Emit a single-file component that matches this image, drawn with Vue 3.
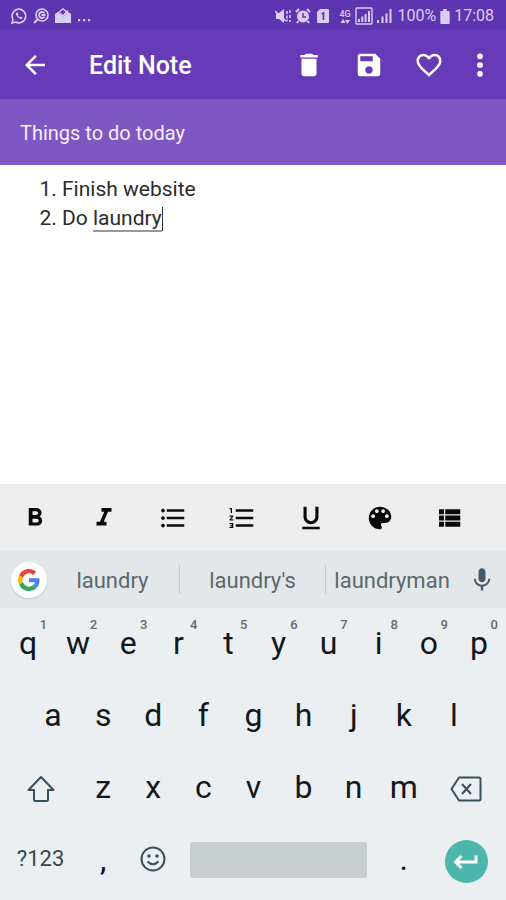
<script setup>
import { ref } from 'vue'

const title = ref('Things to do today')

const actions = [
  { label: 'Delete', d: 'M6 19c0 1.1.9 2 2 2h8c1.1 0 2-.9 2-2V7H6v12zM19 4h-3.500l-1-1h-5l-1 1H5v2h14V4z' },
  { label: 'Save', d: 'M17 3H5a2 2 0 0 0-2 2v14a2 2 0 0 0 2 2h14c1.100 0 2-.9 2-2V7l-4-4zm-5 16c-1.660 0-3-1.340-3-3s1.340-3 3-3 3 1.340 3 3-1.340 3-3 3zm3-10H5V5h10v4z' },
  { label: 'Favourite', d: 'M16.500 3c-1.740 0-3.410.81-4.500 2.090C10.910 3.810 9.240 3 7.500 3 4.420 3 2 5.420 2 8.500c0 3.780 3.400 6.860 8.550 11.540L12 21.350l1.450-1.320C18.600 15.360 22 12.280 22 8.500 22 5.420 19.580 3 16.500 3zm-4.400 15.550l-.1.1-.1-.1C7.140 14.240 4 11.390 4 8.500 4 6.500 5.500 5 7.500 5c1.540 0 3.040.99 3.570 2.360h1.870C13.460 5.990 14.960 5 16.500 5c2 0 3.500 1.500 3.500 3.500 0 2.890-3.140 5.740-7.900 10.050z' },
]

const tools = [
  { label: 'Bold', d: 'M15.600 10.790c.97-.67 1.650-1.770 1.650-2.790 0-2.260-1.750-4-4-4H7v14h7.040c2.090 0 3.710-1.700 3.710-3.790 0-1.520-.86-2.820-2.150-3.420zM10 6.500h3c.83 0 1.500.67 1.500 1.500s-.67 1.500-1.500 1.500h-3v-3zm3.500 9H10v-3h3.500c.83 0 1.500.67 1.500 1.500s-.67 1.500-1.500 1.500z' },
  { label: 'Italic', d: 'M10 4v3h2.210l-3.420 8H6v3h8v-3h-2.210l3.420-8H18V4z' },
  { label: 'Bulleted list', d: 'M4 10.500c-.83 0-1.500.67-1.500 1.500s.67 1.500 1.500 1.500 1.500-.67 1.500-1.500-.67-1.500-1.500-1.500zm0-6c-.83 0-1.500.67-1.500 1.500S3.170 7.500 4 7.500 5.500 6.830 5.500 6 4.830 4.500 4 4.500zm0 12c-.83 0-1.500.68-1.500 1.500s.68 1.500 1.500 1.500 1.500-.68 1.500-1.500-.67-1.500-1.500-1.500zM7 19h14v-2H7v2zm0-6h14v-2H7v2zm0-8v2h14V5H7z' },
  { label: 'Numbered list', d: 'M2 17h2v.5H3v1h1v.5H2v1h3v-4H2v1zm1-9h1V4H2v1h1v3zm-1 3h1.800L2 13.100v.9h3v-1H3.200L5 10.900V10H2v1zm5-6v2h14V5H7zm0 14h14v-2H7v2zm0-6h14v-2H7v2z' },
  { label: 'Underline', d: 'M12 17c3.310 0 6-2.690 6-6V3h-2.500v8c0 1.930-1.570 3.500-3.500 3.500S8.500 12.930 8.500 11V3H6v8c0 3.310 2.690 6 6 6zm-7 2v2h14v-2H5z' },
  { label: 'Colour', d: 'M12 3a9 9 0 0 0 0 18c.83 0 1.500-.67 1.500-1.500 0-.39-.15-.74-.39-1.010-.23-.26-.38-.61-.38-.99 0-.83.67-1.500 1.500-1.500H16c2.760 0 5-2.240 5-5 0-4.420-4.030-8-9-8zm-5.500 9c-.83 0-1.500-.67-1.500-1.500S5.670 9 6.500 9 8 9.670 8 10.500 7.330 12 6.500 12zm3-4C8.670 8 8 7.330 8 6.500S8.670 5 9.500 5s1.500.67 1.500 1.500S10.330 8 9.500 8zm5 0c-.83 0-1.500-.67-1.500-1.500S13.670 5 14.500 5s1.500.67 1.500 1.500S15.330 8 14.500 8zm3 4c-.83 0-1.500-.67-1.500-1.500S16.670 9 17.500 9s1.500.67 1.500 1.500-.67 1.500-1.500 1.500z' },
  { label: 'List view', d: 'M4 14h4v-4H4v4zm0 5h4v-4H4v4zM4 9h4V5H4v4zm5 5h12v-4H9v4zm0 5h12v-4H9v4zM9 5v4h12V5H9z' },
]

const suggestions = ['laundry', "laundry's", 'laundryman']
const topRow = [...'qwertyuiop'].map((letter, i) => ({ letter, digit: (i + 1) % 10 }))
const homeRow = [...'asdfghjkl']
const bottomRow = [...'zxcvbnm']
</script>

<template>
  <div class="screen">
    <div class="status">
      <div class="status-left">
        <svg class="s16" viewBox="0 0 16 16" fill="none" stroke="currentColor">
          <path d="M1 15l1-3.600A6.800 6.800 0 1 1 4.700 14z" stroke-width="1.600" />
          <path d="M5.600 4.500c-1 .8-.9 2.200.5 4s3.600 3.100 4.900 2.300l.6-1.200-1.800-1.100-1 .8c-.9-.4-1.600-1.200-2-2l.7-.9-.8-1.900z" fill="currentColor" stroke="none" />
        </svg>
        <svg class="s16" viewBox="0 0 16 16" fill="none" stroke="currentColor">
          <circle cx="9" cy="7" r="6" stroke-width="1.700" />
          <path d="M5 11l-4 4M11.500 5.200a3 3 0 1 0 0 3.600M8.500 7h4" stroke-width="1.800" />
        </svg>
        <svg class="s16" viewBox="0 0 16 16">
          <path d="M0 6l3-2 5 5 5-5 3 2v9H0z" fill="currentColor" />
          <path d="M3 5l5-4 5 4" fill="none" stroke="currentColor" stroke-width="1.400" />
          <path d="M5 5l3 3 5-5.500" fill="none" stroke="currentColor" stroke-width="1.600" />
        </svg>
        <svg class="s16" viewBox="0 0 16 16" fill="currentColor">
          <path d="M1 11h2.200v2.200H1zM6 11h2.200v2.200H6zM11 11h2.200v2.200H11z" />
        </svg>
      </div>
      <div class="status-right">
        <svg class="s16" viewBox="0 0 16 16">
          <path d="M1 5h3l5-4v14l-5-4H1z" fill="currentColor" />
          <path d="M0 3l11 10" stroke="currentColor" stroke-width="1.500" />
          <path d="M12 3v3m0 1.500v3m0 1v2M15 2v3m0 2v3m0 2v2" stroke="currentColor" stroke-width="1.500" />
        </svg>
        <svg class="s16" viewBox="0 0 16 16" fill="none" stroke="currentColor">
          <circle cx="8" cy="8.500" r="6" fill="currentColor" stroke="none" />
          <path d="M1 4l3-3M15 4l-3-3M3.500 13L2 15M12.500 13l1.500 2" stroke-width="2" />
          <path d="M8 5v4h3" stroke="#5e35b1" stroke-width="1.500" />
        </svg>
        <svg class="s16" viewBox="0 0 16 16">
          <path d="M5 1h8a1 1 0 0 1 1 1v12a1 1 0 0 1-1 1H3a1 1 0 0 1-1-1V4z" fill="currentColor" />
          <path d="M6.500 6L8.500 5v7" fill="none" stroke="#5e35b1" stroke-width="1.700" />
        </svg>
        <span class="network">4G
          <svg viewBox="0 0 12 5" fill="currentColor"><path d="M2 3l2-3 2 3v1H2zM6 1h5L8.500 5z" /></svg>
        </span>
        <svg class="s18" viewBox="0 0 18 18" fill="currentColor">
          <rect x="1" y="1" width="16" height="16" rx="1" fill="none" stroke="currentColor" stroke-width="1.400" />
          <path d="M3 12h2v3H3zM6.300 9.500h2V15h-2zM9.600 7h2v8h-2zM13 4h2v11h-2z" />
        </svg>
        <svg class="s16" viewBox="0 0 16 16" fill="currentColor">
          <path d="M0 12h2v3H0zM4.500 8.500h2V15h-2zM8.500 5.500h2V15h-2zM12.500 1h2v14h-2z" />
        </svg>
        <span class="status-text">100%</span>
        <svg class="battery" viewBox="0 0 10 16" fill="currentColor"><path d="M3 0h4v2h2q1 0 1 1v12q0 1-1 1H1q-1 0-1-1V3q0-1 1-1h2z" /></svg>
        <span class="status-text">17:08</span>
      </div>
    </div>

    <header class="appbar">
      <button class="icon-btn" aria-label="Back">
        <svg class="icon" viewBox="0 0 24 24"><path d="M20 11H7.830l5.590-5.590L12 4l-8 8 8 8 1.410-1.410L7.830 13H20v-2z" /></svg>
      </button>
      <h1>Edit Note</h1>
      <button v-for="a in actions" :key="a.label" class="icon-btn" :aria-label="a.label">
        <svg class="icon" viewBox="0 0 24 24"><path :d="a.d" /></svg>
      </button>
      <button class="icon-btn more" aria-label="More options">
        <svg class="icon" viewBox="0 0 24 24"><circle cx="12" cy="5" r="2.300" /><circle cx="12" cy="12" r="2.300" /><circle cx="12" cy="19" r="2.300" /></svg>
      </button>
    </header>

    <div class="title-row">
      <input v-model="title" type="text" aria-label="Note title" />
    </div>

    <div class="note" contenteditable="true" role="textbox" aria-label="Note" spellcheck="false">
      <ol>
        <li>Finish website</li>
        <li>Do <span class="composing">laundry</span><span class="caret"></span></li>
      </ol>
    </div>

    <div class="tools">
      <button v-for="t in tools" :key="t.label" :aria-label="t.label">
        <svg class="icon" viewBox="0 0 24 24"><path :d="t.d" /></svg>
      </button>
    </div>

    <div class="keyboard">
      <div class="suggestions">
        <button class="google" aria-label="Google">
          <svg viewBox="0 0 48 48">
            <path fill="#ea4335" d="M24 9.500c3.540 0 6.710 1.220 9.210 3.600l6.850-6.850C35.900 2.380 30.470 0 24 0 14.620 0 6.510 5.380 2.560 13.220l7.980 6.190C12.430 13.720 17.740 9.500 24 9.500z" />
            <path fill="#4285f4" d="M46.980 24.550c0-1.570-.15-3.090-.38-4.550H24v9.020h12.940c-.58 2.960-2.260 5.480-4.780 7.180l7.730 6c4.510-4.180 7.090-10.360 7.090-17.650z" />
            <path fill="#fbbc05" d="M10.530 28.590c-.48-1.450-.76-2.990-.76-4.590s.27-3.140.76-4.590l-7.980-6.190C.92 16.460 0 20.120 0 24c0 3.880.92 7.540 2.560 10.780l7.970-6.190z" />
            <path fill="#34a853" d="M24 48c6.480 0 11.930-2.130 15.890-5.810l-7.730-6c-2.150 1.450-4.920 2.300-8.160 2.300-6.260 0-11.570-4.220-13.470-9.910l-7.980 6.190C6.510 42.620 14.620 48 24 48z" />
          </svg>
        </button>
        <button v-for="s in suggestions" :key="s" class="word">{{ s }}</button>
        <button class="mic" aria-label="Voice input">
          <svg viewBox="0 0 24 24"><path d="M12 14c1.660 0 3-1.340 3-3V5c0-1.660-1.340-3-3-3S9 3.340 9 5v6c0 1.660 1.340 3 3 3zm5.300-3c0 3-2.540 5.100-5.300 5.100S6.700 14 6.700 11H5c0 3.410 2.720 6.230 6 6.720V21h2v-3.280c3.280-.48 6-3.300 6-6.720h-1.700z" /></svg>
        </button>
      </div>

      <div class="row top">
        <button v-for="k in topRow" :key="k.letter" class="key">{{ k.letter }}<span class="hint">{{ k.digit }}</span></button>
      </div>
      <div class="row home">
        <button v-for="k in homeRow" :key="k" class="key">{{ k }}</button>
      </div>
      <div class="row lower">
        <button class="key symbol" aria-label="Shift">
          <svg class="glyph" viewBox="0 0 32 32"><path d="M16 4L3.500 17H9v9.500q0 1.500 1.500 1.500h11q1.500 0 1.500-1.500V17h5.500z" /></svg>
        </button>
        <button v-for="k in bottomRow" :key="k" class="key">{{ k }}</button>
        <button class="key symbol" aria-label="Backspace">
          <svg class="glyph" viewBox="0 0 32 32"><path d="M9 4.500h20q1.500 0 1.500 1.500v20q0 1.500-1.500 1.500H9L1.500 16zM12 11l9 10M21 11l-9 10" /></svg>
        </button>
      </div>
      <div class="row base">
        <button class="key mode">?123</button>
        <button class="key">,</button>
        <button class="key" aria-label="Emoji">
          <svg class="glyph" viewBox="0 0 32 32"><circle cx="16" cy="16" r="11.500" /><path d="M10.500 18.500q5.500 5.500 11 0" /><circle class="eye" cx="12" cy="13" r="1.800" /><circle class="eye" cx="20" cy="13" r="1.800" /></svg>
        </button>
        <button class="space" aria-label="Space"></button>
        <button class="key">.</button>
        <button class="key symbol" aria-label="Enter">
          <span class="enter"><svg viewBox="0 0 32 32"><path d="M26 10.500V17H6M11.500 11L5.500 17l6 6" /></svg></span>
        </button>
      </div>
    </div>
  </div>
</template>

<style>
body {
  margin: 0;
}
</style>

<style scoped>
.screen {
  display: flex;
  flex-direction: column;
  min-height: 100vh;
  background: #fff;
  font-family: Roboto, "Liberation Sans", sans-serif;
}
button {
  display: flex;
  align-items: center;
  justify-content: center;
  padding: 0;
  border: 0;
  background: none;
  color: inherit;
  font: inherit;
}
svg {
  display: block;
  flex: none;
}
.status {
  display: flex;
  align-items: center;
  justify-content: space-between;
  height: 30px;
  padding: 2px 12px 0 11px;
  box-sizing: border-box;
  background: #5e35b1;
  color: #d9cdf0;
}
.status-left {
  display: flex;
  gap: 6px;
}
.status-right {
  display: flex;
  align-items: center;
  gap: 4px;
}
.s16 {
  width: 16px;
  height: 16px;
}
.s18 {
  width: 18px;
  height: 18px;
}
.network {
  width: 12px;
  margin-left: 4px;
  font-size: 9px;
  line-height: 10px;
  font-weight: 500;
}
.network svg {
  width: 12px;
  height: 5px;
}
.battery {
  width: 10px;
  height: 15px;
}
.status-text {
  font-size: 16px;
  line-height: 20px;
}
.appbar {
  display: flex;
  align-items: center;
  height: 69px;
  padding: 0 5px;
  background: #673ab7;
  color: #fff;
}
.appbar h1 {
  flex: 1;
  margin: 0;
  padding: 2px 0 0 24px;
  font-size: 25px;
  line-height: 32px;
  font-weight: 500;
}
.icon-btn {
  width: 60px;
  height: 60px;
}
.icon-btn.more {
  width: 42px;
}
.icon {
  width: 30px;
  height: 30px;
  fill: currentColor;
}
.title-row {
  display: flex;
  height: 66px;
  background: #7e57c2;
}
.title-row input {
  flex: 1;
  min-width: 0;
  padding: 2px 20px 0;
  border: 0;
  outline: 0;
  background: none;
  color: #f3eefb;
  font: 400 20px Roboto, "Liberation Sans", sans-serif;
}
.note {
  flex: 1;
  padding: 10px 20px 10px 62px;
  outline: 0;
  color: #2b2b2b;
  font-size: 21px;
  line-height: 29px;
}
.note ol {
  margin: 0;
  padding: 0;
}
.composing {
  display: inline-block;
  line-height: 24px;
  border-bottom: 2px solid #999;
}
.caret {
  display: inline-block;
  width: 1px;
  height: 24px;
  background: #333;
  vertical-align: middle;
}
.tools {
  display: grid;
  grid-template-columns: repeat(7, 1fr);
  height: 66px;
  padding: 1px 22px 0 0;
  background: #eee;
  color: #0a0a0a;
}
.keyboard {
  padding-bottom: 4px;
  background: #eceff1;
}
.suggestions {
  display: grid;
  grid-template-columns: 46px 1fr 1.1fr 1fr 48px;
  align-items: center;
  height: 57px;
  background: #e4e7e9;
  color: #5a676d;
}
.google {
  width: 36px;
  height: 36px;
  margin-left: 11px;
  border-radius: 50%;
  background: #fff;
  box-shadow: 0 1px 2px rgba(0, 0, 0, 0.15);
}
.google svg {
  width: 22px;
  height: 22px;
}
.word {
  height: 29px;
  padding-top: 2px;
  font-size: 22px;
}
.word + .word {
  border-left: 1px solid #c5cacd;
}
.mic svg {
  width: 28px;
  height: 28px;
  fill: #455a64;
}
.row {
  display: grid;
  height: 72px;
  padding: 0 2px 0 3px;
}
.top {
  grid-template-columns: repeat(10, 1fr);
}
.home {
  grid-template-columns: repeat(9, 1fr);
  padding: 0 27px 0 28px;
}
.lower {
  grid-template-columns: 3fr repeat(7, 2fr) 3fr;
}
.base {
  grid-template-columns: 3fr 2fr 2fr 8fr 2fr 3fr;
  align-items: center;
}
.key {
  position: relative;
  min-width: 0;
  height: 72px;
  padding-bottom: 2px;
  color: #11181b;
  font-size: 32px;
  line-height: 38px;
}
.key.symbol {
  padding: 2px 0 0;
}
.hint {
  position: absolute;
  top: 9px;
  right: 6px;
  color: #5f6b70;
  font-size: 13px;
  line-height: 16px;
  font-weight: 500;
}
.key.mode {
  color: #37474f;
  font-size: 22px;
}
.glyph {
  width: 32px;
  height: 32px;
  fill: none;
  stroke: #37505a;
  stroke-width: 2;
  stroke-linejoin: round;
}
.glyph .eye {
  fill: #37505a;
  stroke: none;
}
.space {
  height: 36px;
  margin: 0 12px;
  border-radius: 3px;
  background: #c8cdcf;
}
.enter {
  display: flex;
  align-items: center;
  justify-content: center;
  width: 43px;
  height: 43px;
  border-radius: 50%;
  background: #4db6ac;
}
.enter svg {
  width: 32px;
  height: 32px;
  fill: none;
  stroke: #fff;
  stroke-width: 3;
}
</style>
